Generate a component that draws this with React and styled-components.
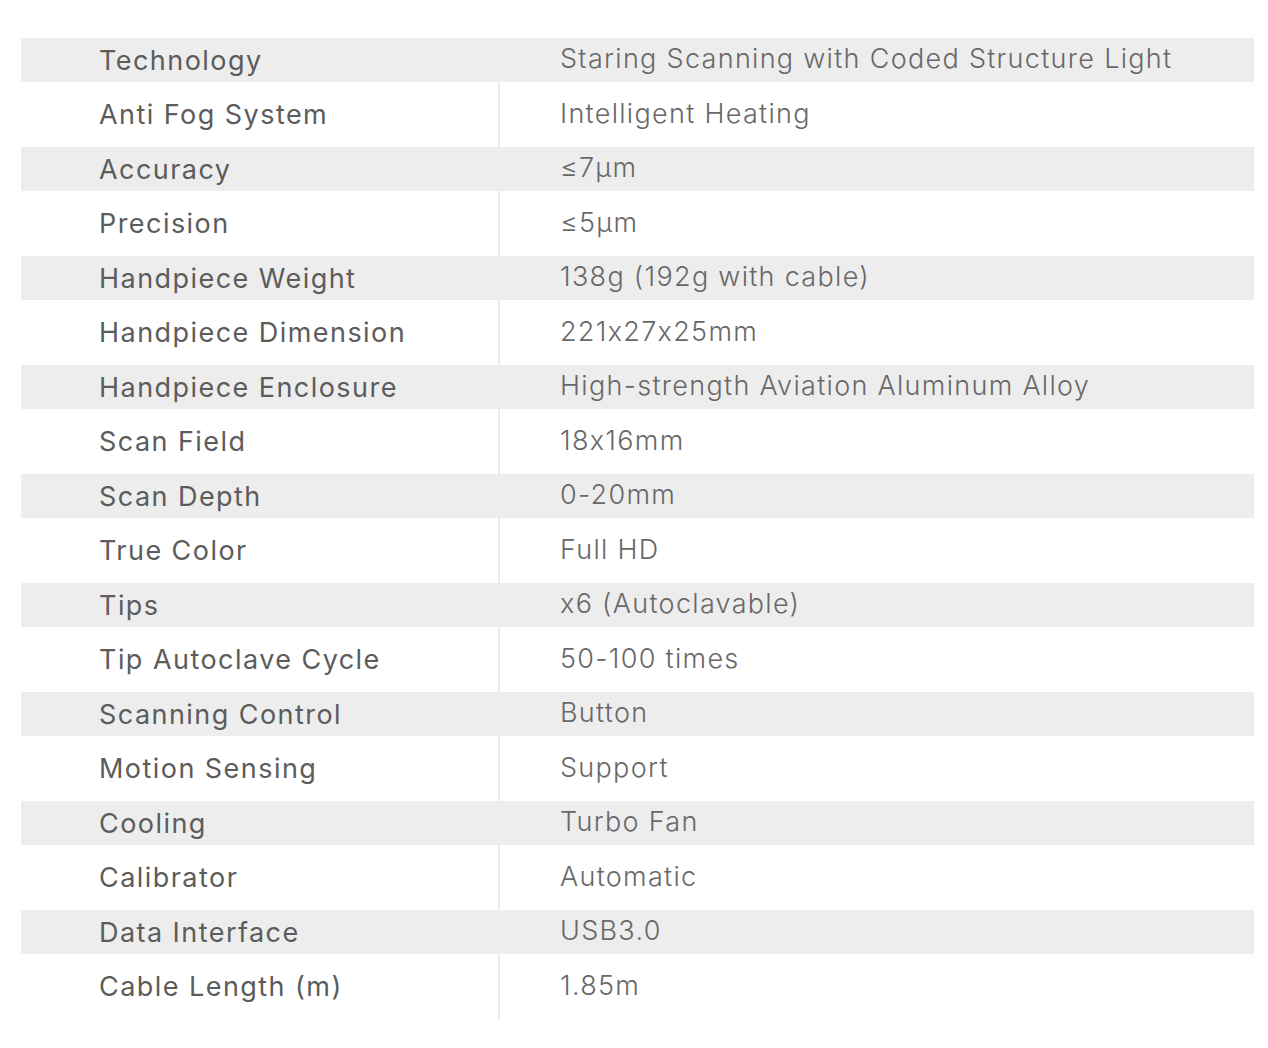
import { Fragment } from "react"
import styled, { createGlobalStyle } from "styled-components"

const GlobalStyle = createGlobalStyle`
  body {
    margin: 0;
    background: #ffffff;
    font-family: Inter, "Noto Sans", sans-serif;
  }
`

const Page = styled.div`
  width: 100%;
  padding: 38px 14px 28px 21px;
  box-sizing: border-box;
`

const Table = styled.div`
  display: grid;
  grid-template-columns: 479px 1fr;
`

const Label = styled.div`
  height: ${p => (p.$shade ? "44px" : "65px")};
  background: ${p => (p.$shade ? "#ededed" : "#ffffff")};
  border-right: 2px solid ${p => (p.$shade ? "#ededed" : "#ebebeb")};
  display: flex;
  align-items: center;
  padding-left: 78px;
  box-sizing: border-box;
  font-size: 27px;
  font-weight: 400;
  letter-spacing: 1.45px;
  color: #5c5c5c;
`

const Value = styled.div`
  height: ${p => (p.$shade ? "44px" : "65px")};
  background: ${p => (p.$shade ? "#ededed" : "#ffffff")};
  display: flex;
  align-items: center;
  padding-left: 60px;
  padding-bottom: 3px;
  box-sizing: border-box;
  font-size: 27px;
  font-weight: 300;
  letter-spacing: 1.3px;
  color: #686868;
`

const specs = [
  ["Technology", "Staring Scanning with Coded Structure Light"],
  ["Anti Fog System", "Intelligent Heating"],
  ["Accuracy", "≤7μm"],
  ["Precision", "≤5μm"],
  ["Handpiece Weight", "138g (192g with cable)"],
  ["Handpiece Dimension", "221x27x25mm"],
  ["Handpiece Enclosure", "High-strength Aviation Aluminum Alloy"],
  ["Scan Field", "18x16mm"],
  ["Scan Depth", "0-20mm"],
  ["True Color", "Full HD"],
  ["Tips", "x6 (Autoclavable)"],
  ["Tip Autoclave Cycle", "50-100 times"],
  ["Scanning Control", "Button"],
  ["Motion Sensing", "Support"],
  ["Cooling", "Turbo Fan"],
  ["Calibrator", "Automatic"],
  ["Data Interface", "USB3.0"],
  ["Cable Length (m)", "1.85m"],
]

const App = () => {
  return (
    <>
      <GlobalStyle />
      <Page>
        <Table>
          {specs.map(([name, value], i) => (
            <Fragment key={name}>
              <Label $shade={i % 2 === 0}>{name}</Label>
              <Value $shade={i % 2 === 0}>{value}</Value>
            </Fragment>
          ))}
        </Table>
      </Page>
    </>
  )
}

export default App
